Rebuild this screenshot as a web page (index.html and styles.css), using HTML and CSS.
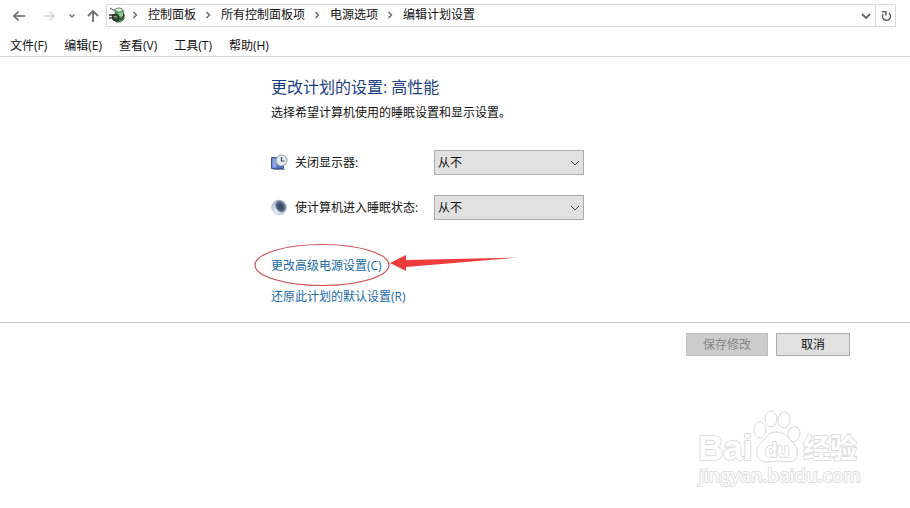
FILE: index.html
```html
<!DOCTYPE html>
<html lang="zh-CN">
<head>
<meta charset="utf-8">
<title>编辑计划设置</title>
<link rel="stylesheet" href="styles.css">
</head>
<body>
<header class="top">
  <div class="navbar">
    <button class="nav back" type="button" aria-label="后退"><svg width="14" height="14" viewBox="0 0 14 14"><path d="M13 7H2M6.500 2.500L2 7l4.500 4.500" stroke="#666" stroke-width="1.600"/></svg></button>
    <button class="nav forward" type="button" aria-label="前进"><svg width="14" height="14" viewBox="0 0 14 14"><path d="M1 7h11M7.500 2.500L12 7l-4.500 4.500" stroke="#d6d6d6" stroke-width="1.400"/></svg></button>
    <button class="nav recent" type="button" aria-label="最近"><svg width="8" height="8" viewBox="0 0 8 8"><path d="M1.500 2.500L4 5l2.500-2.500" stroke="#777" stroke-width="1.500"/></svg></button>
    <button class="nav up" type="button" aria-label="向上"><svg width="14" height="14" viewBox="0 0 14 14"><path d="M7 13V2M2 7l5-5 5 5" stroke="#707070" stroke-width="1.800"/></svg></button>
    <div class="address">
      <svg class="plug" width="18" height="18" viewBox="0 0 18 18">
        <path d="M1 1q3 3 7 2" stroke="#454b45" stroke-width="1"/>
        <path d="M6 3q4-3 8 0l1 9q-3 4-8 3z" fill="#4a9255" stroke="#3a6e42"/>
        <ellipse cx="10" cy="3" rx="3.500" ry="2" fill="#e5f1df" stroke="#5e8d61"/>
        <path d="M9 6l5-1v4l-4 1z" fill="#93c59a"/>
        <path d="M0 8h5M0 11h5" stroke="#3a3a30" stroke-width="1.300"/>
        <path d="M3 8q4-2 7 1v4q-3 2-6 0z" fill="#3c4a3a" stroke="#252f25"/>
        <path d="M5 9.500l3 .5" stroke="#a9bba4"/>
        <path d="M10 12q5 1 5-5" stroke="#2c4a30" stroke-width="1.500"/>
      </svg>
      <nav class="crumbs">
        <svg class="sep" width="7" height="8" viewBox="0 0 7 8"><path d="M1.500 1L4.500 4 1.500 7"/></svg><a href="#">控制面板</a>
        <svg class="sep" width="7" height="8" viewBox="0 0 7 8"><path d="M1.500 1L4.500 4 1.500 7"/></svg><a href="#">所有控制面板项</a>
        <svg class="sep" width="7" height="8" viewBox="0 0 7 8"><path d="M1.500 1L4.500 4 1.500 7"/></svg><a href="#">电源选项</a>
        <svg class="sep" width="7" height="8" viewBox="0 0 7 8"><path d="M1.500 1L4.500 4 1.500 7"/></svg><a href="#">编辑计划设置</a>
      </nav>
      <button class="nav history" type="button" aria-label="以前的位置"><svg width="10" height="8" viewBox="0 0 10 8"><path d="M1 2l4 4 4-4" stroke="#666" stroke-width="1.800"/></svg></button>
      <button class="nav refresh" type="button" aria-label="刷新"><svg width="12" height="12" viewBox="0 0 12 12"><path d="M9 3.200A4 4 0 1 1 3.200 4M2 1.800h3.800v3.800" stroke="#666" stroke-width="1.600"/></svg></button>
    </div>
  </div>
  <nav class="menu"><a href="#">文件(F)</a><a href="#">编辑(E)</a><a href="#">查看(V)</a><a href="#">工具(T)</a><a href="#">帮助(H)</a></nav>
</header>
<main class="content">
  <h1>更改计划的设置: 高性能</h1>
  <p class="intro">选择希望计算机使用的睡眠设置和显示设置。</p>
  <div class="settings">
    <svg width="18" height="18" viewBox="0 0 18 18">
      <path d="M.5 3.500h12v11H.5z" fill="#5873c6" stroke="#3d549c"/>
      <path d="M1.500 4.500h4v9h-4z" fill="#8fa8e4"/>
      <path d="M2 15.500h12" stroke="#8790a8"/>
      <circle cx="10.500" cy="6.500" r="5.500" fill="#e6ebf0" stroke="#8b95a5"/>
      <path d="M10.500 3v4h3" stroke="#3c4961" stroke-width="1.200"/>
    </svg>
    <label for="display">关闭显示器:</label>
    <div class="select"><select id="display"><option>从不</option></select><svg width="10" height="6" viewBox="0 0 10 6"><path d="M1 1l4 4 4-4" stroke="#444"/></svg></div>
    <svg width="18" height="18" viewBox="0 0 18 18">
      <defs>
        <radialGradient id="moon" cx="35%" cy="70%" r="70%"><stop offset="0" stop-color="#e9eef7"/><stop offset="1" stop-color="#a3b0c6"/></radialGradient>
        <radialGradient id="shade"><stop offset="0.500" stop-color="#3f4f6c"/><stop offset="1" stop-color="#7686a2"/></radialGradient>
      </defs>
      <circle cx="8" cy="8.500" r="7.800" fill="url(#moon)"/>
      <ellipse cx="9.500" cy="7.500" rx="4.800" ry="6" transform="rotate(-35 9.500 7.500)" fill="url(#shade)"/>
    </svg>
    <label for="sleep">使计算机进入睡眠状态:</label>
    <div class="select"><select id="sleep"><option>从不</option></select><svg width="10" height="6" viewBox="0 0 10 6"><path d="M1 1l4 4 4-4" stroke="#444"/></svg></div>
  </div>
  <div class="links">
    <div class="marked">
      <a href="#">更改高级电源设置(C)</a>
      <svg class="mark" width="266" height="46" viewBox="0 0 266 46">
        <ellipse cx="69" cy="23" rx="67" ry="20.500" stroke="#d14b50" stroke-width="1.200"/>
        <path d="M137 21l16-8v5l112-2.500L153 25v4z" fill="#ee3b3b"/>
      </svg>
    </div>
    <a href="#">还原此计划的默认设置(R)</a>
  </div>
</main>
<footer class="actions">
  <button class="save" type="button" disabled>保存修改</button>
  <button class="cancel" type="button">取消</button>
</footer>
<svg class="watermark" width="170" height="84" viewBox="0 0 170 84">
  <g fill="#fff" stroke="#d9d9d9">
    <ellipse cx="68" cy="22" rx="6" ry="8"/>
    <ellipse cx="79" cy="11" rx="6" ry="8"/>
    <ellipse cx="92" cy="12" rx="6" ry="8" transform="rotate(12 92 12)"/>
    <ellipse cx="102" cy="26" rx="6" ry="7.500" transform="rotate(12 102 26)"/>
    <path d="M84 24c-9 0-9 6-15 11-7 6-5 19 5 19 6 0 8-1 12-1s6 1 11 1c9 0 11-11 5-18-6-6-8-12-18-12z"/>
  </g>
  <text class="brand" x="6" y="52">Bai</text>
  <text class="du" x="73" y="49">du</text>
  <text class="exp" x="111" y="50">经验</text>
  <text class="domain" x="7" y="74">jingyan.baidu.com</text>
</svg>
</body>
</html>
```
FILE: styles.css
```css
* { box-sizing: border-box; }

body {
  margin: 0;
  min-height: 100vh;
  position: relative;
  background: #fff;
  color: #111;
  font: 12px/18px "Open Sans", "Noto Sans CJK SC", sans-serif;
}

svg { display: block; flex: none; fill: none; }
a { color: inherit; text-decoration: none; }
button, select { font: inherit; color: inherit; }

.top {
  border-bottom: 1px solid #d9d9d9;
  padding-top: 4px;
}

.navbar {
  display: flex;
  align-items: center;
  padding: 0 14px 0 12px;
}

.nav {
  display: flex;
  align-items: center;
  justify-content: center;
  border: 0;
  padding: 0;
  background: none;
}

.forward { margin-left: 16px; }
.recent { margin-left: 12px; }
.up { margin-left: 10px; }

.address {
  display: flex;
  flex: 1;
  align-items: center;
  height: 23px;
  margin-left: 6px;
  border: 1px solid #d9d9d9;
}

.plug { margin-left: 2px; }

.crumbs {
  display: flex;
  flex: 1;
  align-items: center;
  gap: 9px;
  margin-left: 5px;
  padding-bottom: 2px;
}

.sep { stroke: #666; stroke-width: 1.4; }
.history { width: 18px; height: 100%; }

.refresh {
  width: 20px;
  height: 100%;
  border-left: 1px solid #d9d9d9;
}

.menu {
  display: flex;
  gap: 17px;
  padding: 10px 10px 1px;
}

.content { padding: 18px 0 16px 271px; }

h1 {
  margin: 0;
  color: #1b3f85;
  font-size: 16px;
  font-weight: 400;
  line-height: 24px;
}

.intro { margin: 5px 0 28px; }

.settings {
  display: grid;
  grid-template-columns: 24px 139px 150px;
  row-gap: 20px;
  align-items: center;
}

.select { position: relative; }

.select select {
  display: block;
  width: 100%;
  height: 25px;
  padding: 0 3px;
  appearance: none;
  border: 1px solid #acacac;
  border-radius: 0;
  background: #e1e1e1;
}

.select svg {
  position: absolute;
  top: 10px;
  right: 4px;
  pointer-events: none;
}

.links {
  display: flex;
  flex-direction: column;
  align-items: flex-start;
  gap: 13px;
  margin-top: 37px;
  color: #1b6aa8;
}

.marked { position: relative; }

.mark {
  position: absolute;
  top: -15px;
  left: -18px;
  pointer-events: none;
}

.actions {
  display: flex;
  justify-content: flex-end;
  gap: 8px;
  padding: 10px 60px 0 0;
  border-top: 1px solid #c3c3c3;
}

.actions button {
  height: 23px;
  padding: 0;
  border: 1px solid #acacac;
  background: #e1e1e1;
}

.actions .save {
  width: 82px;
  border-color: #bfbfbf;
  background: #ccc;
  color: #858585;
}

.actions .cancel { width: 74px; }

.watermark {
  position: absolute;
  right: 48px;
  bottom: 16px;
}

.watermark text {
  fill: #fff;
  stroke: #ddd;
  stroke-width: 2px;
  stroke-linejoin: round;
  paint-order: stroke;
}

.watermark .brand { font: 700 35px "Liberation Sans", sans-serif; }
.watermark .du { font: 700 20px "Liberation Sans", sans-serif; }
.watermark .exp { font: 700 27px "Noto Sans CJK SC", sans-serif; }
.watermark .domain { font: 400 19px "Open Sans", sans-serif; }
```
